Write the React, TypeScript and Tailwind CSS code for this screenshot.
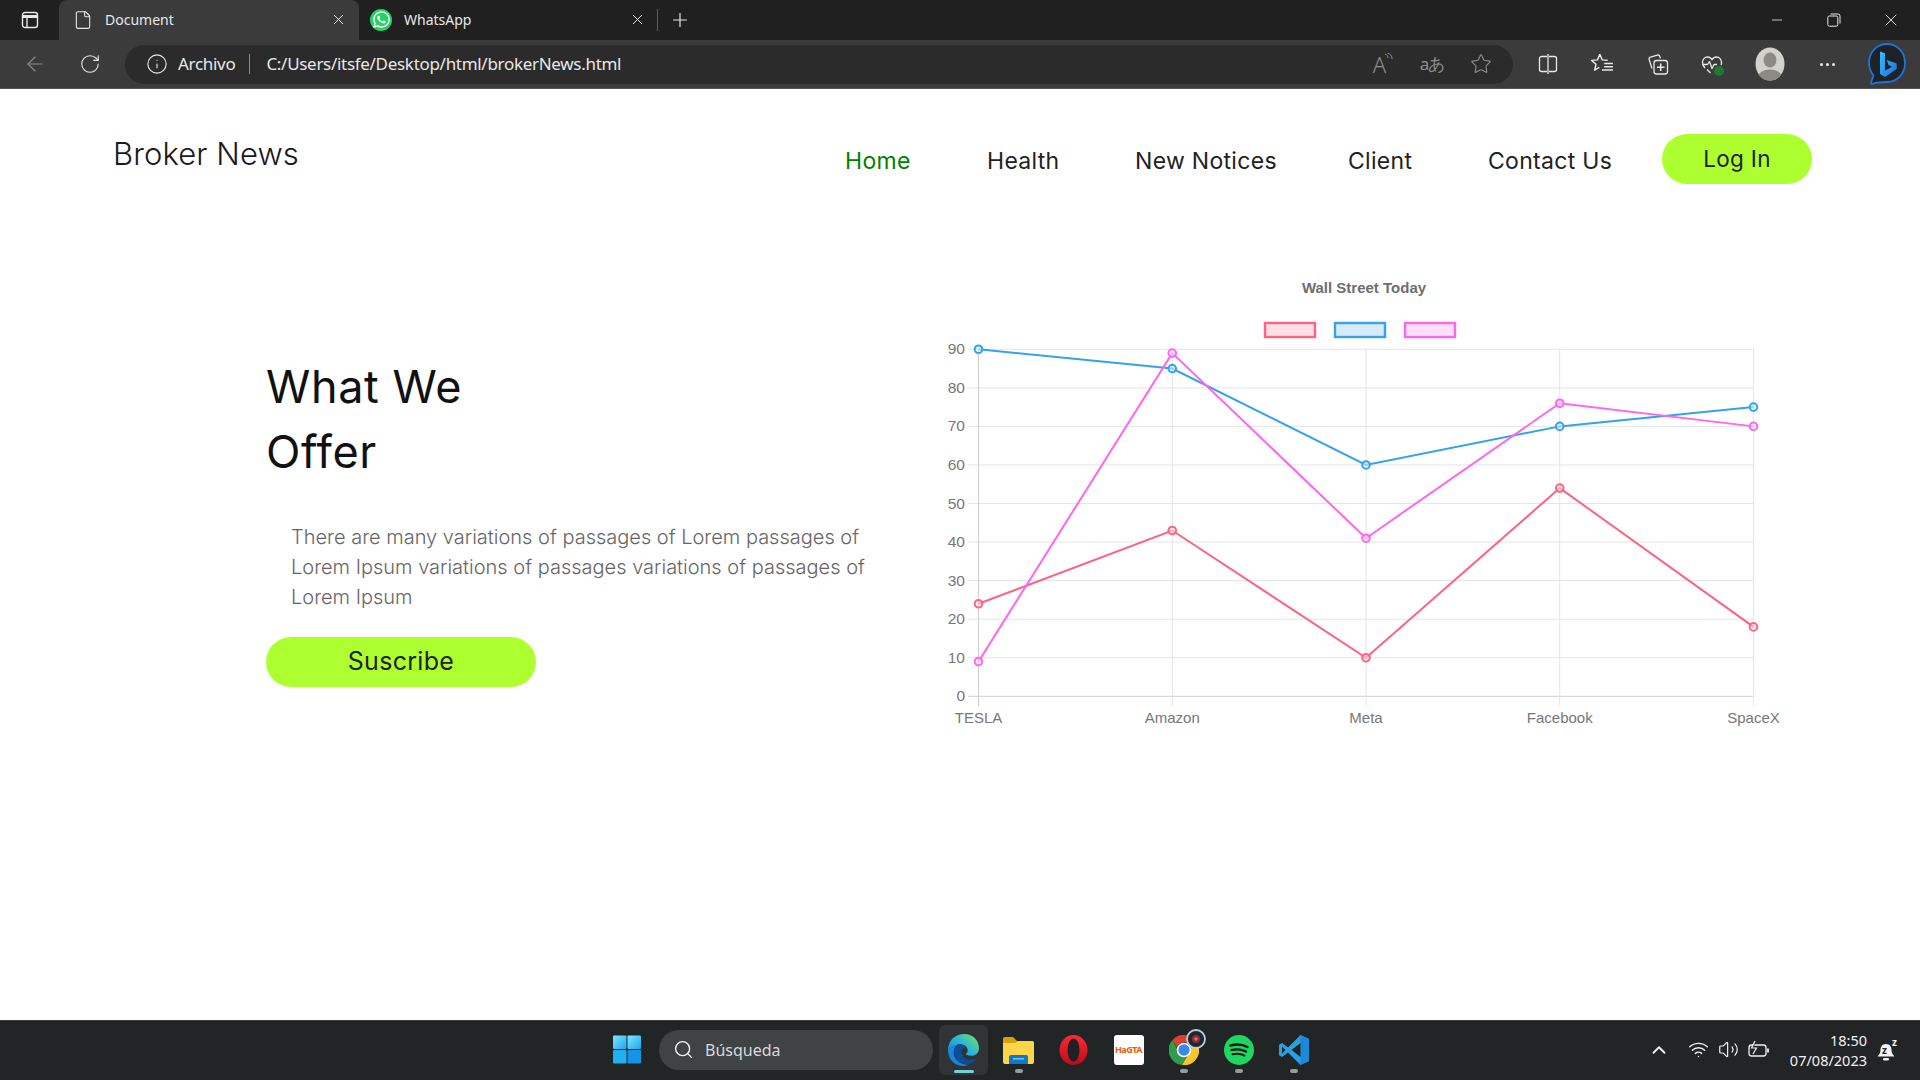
// App.tsx
import React from "react";
import { ArrowLeft, ChevronUp, File, Info, Minus, Plus, RotateCw, Search, Star, Volume2, Wifi, X } from "lucide-react";
import { FaWhatsapp } from "react-icons/fa";

const labels = ["TESLA", "Amazon", "Meta", "Facebook", "SpaceX"];
const series = [
    { color: "#ff6384", fill: "#ffe0e6", data: [24, 43, 10, 54, 18] },
    { color: "#36a2eb", fill: "#d7ecfb", data: [90, 85, 60, 70, 75] },
    { color: "#ff66ee", fill: "#ffe0fc", data: [9, 89, 41, 76, 70] },
];

const chartX = (i: number) => 978.5 + i * 193.75;
const chartY = (v: number) => 696.3 - v * 3.856;

function WallStreetChart() {
    const ticks = [0, 10, 20, 30, 40, 50, 60, 70, 80, 90];
    return (
        <svg width="860" height="470" viewBox="940 270 860 470" className="shrink-0" fontFamily="'Liberation Sans', Arial, sans-serif">
            <text x="1364" y="293" textAnchor="middle" fontSize="15" fontWeight="700" fill="#6e6e6e">Wall Street Today</text>
            {series.map((s, i) => (
                <rect key={s.color} x={1265 + i * 70} y="323" width="50" height="14" fill={s.fill} stroke={s.color} strokeWidth="2.4" />
            ))}
            {/* grid */}
            {ticks.map(t => (
                <g key={t}>
                    <line x1="968" x2="1753.5" y1={chartY(t)} y2={chartY(t)} stroke={t === 0 ? "#cfcfcf" : "#e5e5e5"} strokeWidth="1" />
                    <text x="965" y={chartY(t) + 5} textAnchor="end" fontSize="15.5" fill="#777">{t}</text>
                </g>
            ))}
            {labels.map((l, i) => (
                <g key={l}>
                    <line x1={chartX(i)} x2={chartX(i)} y1="349.3" y2="706" stroke={i === 0 ? "#cfcfcf" : "#e5e5e5"} strokeWidth="1" />
                    <text x={chartX(i)} y="723" textAnchor="middle" fontSize="15" fill="#777">{l}</text>
                </g>
            ))}
            {/* lines */}
            {series.map(s => (
                <g key={s.color}>
                    <polyline
                        fill="none"
                        stroke={s.color}
                        strokeWidth="2"
                        points={s.data.map((v, i) => `${chartX(i)},${chartY(v)}`).join(" ")}
                    />
                    {s.data.map((v, i) => (
                        <circle key={i} cx={chartX(i)} cy={chartY(v)} r="3.8" fill={s.fill} fillOpacity="0.6" stroke={s.color} strokeWidth="2" />
                    ))}
                </g>
            ))}
        </svg>
    );
}

function SidebarIcon() {
    return (
        <svg width="18" height="18" viewBox="0 0 18 18" fill="none" stroke="#e8e8e8" strokeWidth="1.4">
            <rect x="1.5" y="1.5" width="15" height="15" rx="2.5" />
            <path d="M1.5 5.5h15" strokeWidth="3" />
            <path d="M6 5.5v11" />
        </svg>
    );
}

function RestoreIcon() {
    return (
        <svg width="14" height="14" viewBox="0 0 14 14" fill="none" stroke="#e8e8e8" strokeWidth="1">
            <rect x="0.8" y="3" width="10" height="10.2" rx="1.6" />
            <path d="M3.5 1h7.5a2 2 0 0 1 2 2v7.5" />
        </svg>
    );
}

function ReadAloudIcon() {
    return (
        <span className="relative -ml-[7px] flex h-6 w-6 items-center justify-center">
            <span className="font-['Noto_Sans',sans-serif] text-[22px] leading-none font-light text-[#8f8f8f]">A</span>
            <svg className="absolute top-[1px] -right-[1px]" width="9" height="10" viewBox="0 0 9 10" fill="none" stroke="#8f8f8f" strokeWidth="1">
                <path d="M1 1c2 .6 3 2 3 4" />
                <path d="M3.5 0c3 .8 4.6 3 4.6 6" />
            </svg>
        </span>
    );
}

function SplitIcon() {
    return (
        <svg width="20" height="22" viewBox="0 0 20 22" fill="none" stroke="#e8e8e8" strokeWidth="1.3">
            <path d="M9 3.5H3.5a2 2 0 0 0-2 2v11a2 2 0 0 0 2 2H9" />
            <path d="M11 3.5h5.5a2 2 0 0 1 2 2v11a2 2 0 0 1-2 2H11" />
            <path d="M10 1v20" />
        </svg>
    );
}

function FavoritesIcon() {
    return (
        <svg width="24" height="24" viewBox="0 0 22 22" fill="none" stroke="#e8e8e8" strokeWidth="1.3" strokeLinejoin="round">
            <path d="M9 2l2.2 5.2 5 .4M9 2L6.8 7.2l-5.3.5 4 3.6-1.3 5.4 4.3-2.6" />
            <path d="M13 10.5h8M13 13.5h8M11 16.5h10" />
        </svg>
    );
}

function CollectionsIcon() {
    return (
        <svg width="22" height="22" viewBox="0 0 22 22" fill="none" stroke="#e8e8e8" strokeWidth="1.3">
            <path d="M5 15.5 2.2 6.6a2 2 0 0 1 1.3-2.5l6.8-2a2 2 0 0 1 2.5 1.3l.6 2" />
            <rect x="7" y="7.5" width="13.5" height="13.5" rx="2.5" />
            <path d="M13.7 10.5v7.5M10 14.2h7.5" strokeWidth="1.6" />
        </svg>
    );
}

function HeartIcon() {
    return (
        <span className="relative flex h-6 w-6 items-center justify-center">
            <svg width="22" height="22" viewBox="0 0 22 22" fill="none" stroke="#e8e8e8" strokeWidth="1.3" strokeLinejoin="round">
                <path d="M4 15C2.4 13.3 1.5 11.8 1.5 9.5 1.5 6.5 3.6 4 6.5 4c2 0 3.5 1 4.500 2.700C12 5 13.500 4 15.500 4c2.900 0 5 2.500 5 5.500 0 1-.2 1.800-.5 2.500" />
                <path d="M1.500 11.500h5l2-3 2.500 7 2-4h3" />
                <path d="M6 16.500l3.500 3.500" />
            </svg>
            <span className="absolute right-0 bottom-0 h-[10px] w-[10px] rounded-full bg-[#1d7a34]" />
        </span>
    );
}

function Avatar() {
    return (
        <svg width="30" height="34" viewBox="0 0 30 34">
            <defs>
                <clipPath id="avatarClip">
                    <ellipse cx="15" cy="17" rx="14.5" ry="16.5" />
                </clipPath>
            </defs>
            <ellipse cx="15" cy="17" rx="14.5" ry="16.5" fill="#d2d1cc" />
            <g clipPath="url(#avatarClip)">
                <ellipse cx="15" cy="13" rx="6.5" ry="7.5" fill="#8b8a87" />
                <ellipse cx="15" cy="30" rx="12" ry="7.5" fill="#8b8a87" />
            </g>
        </svg>
    );
}

function BingIcon() {
    return (
        <svg width="40" height="44" viewBox="0 0 40 44">
            <defs>
                <linearGradient id="bingB" x1="0" y1="0" x2="1" y2="1">
                    <stop offset="0" stopColor="#37bdf8" />
                    <stop offset="1" stopColor="#1a6fe0" />
                </linearGradient>
            </defs>
            <path d="M20 2C10 2 2 10 2 21c0 5 1.8 9 4.5 12.5L4 40.5c-.3 1.200.5 1.700 1.500 1.300 3.500-1.300 7-1.800 14.500-1.800 10 0 18-8 18-19S30 2 20 2Z" fill="#1e2227" stroke="#1b74d8" strokeWidth="1.8" />
            <path d="M13 9.500l5 1.800v17.500l7-4-3.500-1.700-1.800-5 10 3.500v5.500L18 35l-5-3Z" fill="url(#bingB)" />
        </svg>
    );
}

function WindowsLogo() {
    return (
        <svg width="29" height="29" viewBox="0 0 29 29">
            <defs>
                <linearGradient id="winA" x1="0" y1="0" x2="1" y2="1">
                    <stop offset="0" stopColor="#7fe6ff" />
                    <stop offset="1" stopColor="#1aa9f0" />
                </linearGradient>
            </defs>
            <rect x="0" y="0" width="14" height="14" rx="1" fill="url(#winA)" />
            <rect x="15" y="0" width="14" height="14" rx="1" fill="url(#winA)" />
            <rect x="0" y="15" width="14" height="14" rx="1" fill="#22b0f3" />
            <rect x="15" y="15" width="14" height="14" rx="1" fill="#1593e6" />
        </svg>
    );
}

function EdgeLogo() {
    return (
        <svg width="33" height="33" viewBox="0 0 34 34">
            <defs>
                <linearGradient id="edgeTop" x1="0" y1="1" x2="1" y2="0.2">
                    <stop offset="0" stopColor="#1180d8" />
                    <stop offset="0.55" stopColor="#2bb6d8" />
                    <stop offset="1" stopColor="#6bdc6c" />
                </linearGradient>
            </defs>
            <path d="M1 18C1 8 8 1 18 1c9 0 15 7 15 14.5 0 5-3.5 8-8 8-3 0-5-.8-5.5-1.800 2-1.500 2.500-4 1-6.500-2-3-6-4.300-10-3.200C6 13.500 2.500 15 1 18Z" fill="url(#edgeTop)" />
            <path d="M1 18c1.500-3 5-5.500 10-5.800C7 15 6 20 8 25c2 4.500 8 8.500 15 7.500-2 1-4 1.500-6 1.500C8 34 1 27 1 18Z" fill="#1886db" />
            <path d="M11 12.200c4-1 8.500-.2 10 3.500-4-1.700-7 1-6 5.500 1 4 5 6.800 10.500 6.300 2 0 3.500-.5 5-1.300-2 3-4.500 5-7.500 5.800-7 1-13-3-15-7.500-2-5-1-10 3-12.300Z" fill="#0c4f96" />
        </svg>
    );
}

function FolderLogo() {
    return (
        <svg width="31" height="28" viewBox="0 0 31 28">
            <path d="M0 3a2 2 0 0 1 2-2h8l4 4h15a2 2 0 0 1 2 2v4H0Z" fill="#d9a008" />
            <path d="M0 7h12l3-2h14a2 2 0 0 1 2 2v19a2 2 0 0 1-2 2H2a2 2 0 0 1-2-2Z" fill="#fdd54b" />
            <path d="M6 28v-7a2 2 0 0 1 2-2h15a2 2 0 0 1 2 2v7Z" fill="#0f78c9" />
            <rect x="10" y="22" width="11" height="1.5" fill="#7cc4f5" />
        </svg>
    );
}

function OperaLogo() {
    return (
        <svg width="29" height="30" viewBox="0 0 29 30">
            <defs>
                <linearGradient id="operaRed" x1="0" y1="0" x2="0" y2="1">
                    <stop offset="0" stopColor="#ff2a33" />
                    <stop offset="1" stopColor="#b80c1c" />
                </linearGradient>
            </defs>
            <ellipse cx="14.5" cy="15" rx="14" ry="15" fill="url(#operaRed)" />
            <ellipse cx="14.5" cy="15" rx="6" ry="11.5" fill="#1f2223" />
        </svg>
    );
}

function ChromeLogo() {
    return (
        <span className="relative flex h-[30px] w-[30px] items-center justify-center">
            <svg width="30" height="30" viewBox="0 0 30 30">
                <path d="M15 0a15 15 0 0 1 13 7.5H15a7.5 7.5 0 0 0-7 4.800L3.500 5A15 15 0 0 1 15 0Z" fill="#e2402f" />
                <path d="M3.500 5 10 17a7.500 7.500 0 0 0 7.500 5L13 30A15 15 0 0 1 3.500 5Z" fill="#2f9e4b" />
                <path d="M28 7.500A15 15 0 0 1 13 30l6.500-11a7.500 7.500 0 0 0 0-11.500Z" fill="#f7c526" />
                <circle cx="15" cy="15" r="6.5" fill="#3b87f0" stroke="#fff" strokeWidth="1.6" />
            </svg>
            <svg className="absolute -top-[6px] -right-[7px]" width="20" height="20" viewBox="0 0 20 20">
                <circle cx="10" cy="10" r="9" fill="#23262c" stroke="#b9cfe0" strokeWidth="1.8" />
                <circle cx="10" cy="10" r="4" fill="#8a2b3f" />
                <circle cx="10" cy="10" r="1.8" fill="#f0693f" />
            </svg>
        </span>
    );
}

function SpotifyLogo() {
    return (
        <svg width="30" height="30" viewBox="0 0 30 30" fill="none" stroke="#17181a" strokeLinecap="round">
            <circle cx="15" cy="15" r="15" fill="#1ed760" stroke="none" />
            <path d="M6.5 10.5c6-1.600 12-1.100 17 1.500" strokeWidth="2.5" />
            <path d="M7.5 15c5-1.300 10-.8 14.500 1.500" strokeWidth="2.2" />
            <path d="M8.5 19.300c4.500-1 8.500-.6 12 1.300" strokeWidth="1.9" />
        </svg>
    );
}

function VSCodeLogo() {
    return (
        <svg width="30" height="30" viewBox="0 0 30 30">
            <path d="M21.5 0 30 4v22l-8.500 4L9 17.500 3 22l-3-1.700V9.700L3 8l6 4.500Z" fill="#2a9fe4" />
            <path d="M21.5 0 30 4v22l-8.500 4Z" fill="#1a8ad8" />
            <path d="M21.5 8 12.500 15l9 7Z" fill="#1f2223" />
            <path d="M3 11.500 6.500 15 3 18.500Z" fill="#1f2223" />
        </svg>
    );
}

function BatteryIcon() {
    return (
        <svg width="22" height="20" viewBox="0 0 22 20" fill="none" stroke="#f2f2f2" strokeWidth="1.3">
            <rect x="1" y="5" width="17" height="11" rx="2.5" />
            <path d="M20 8.500v4" strokeWidth="1.8" />
            <path d="M7 1 3.500 8h5L5 14" fill="#222526" strokeWidth="1.2" />
        </svg>
    );
}

function BellIcon() {
    return (
        <span className="relative flex h-[24px] w-[22px] items-end justify-center">
            <svg width="20" height="20" viewBox="0 0 20 20">
                <path d="M10 2C6 2 4.500 5 4.500 8c0 3-1.300 4.500-3 6.500h17C16.800 12.500 15.500 11 15.500 8c0-3-1.500-6-5.500-6Z" fill="#f2f2f2" />
                <rect x="7" y="16" width="6" height="2.4" rx="1.2" fill="#f2f2f2" />
            </svg>
            <span className="absolute top-[7px] left-[7px] text-[10px] leading-none font-bold text-[#222526]">z</span>
            <span className="absolute -top-[1px] right-0 text-[10px] leading-none font-bold text-[#f2f2f2]">z</span>
        </span>
    );
}

const navItems = [
    { label: "Health", width: "w-[73px]" },
    { label: "New Notices", width: "w-[138px]" },
    { label: "Client", width: "w-[65px]" },
];

export default function App() {
    return (
        <div className="flex h-[1080px] w-[1920px] flex-col overflow-hidden bg-white font-['Inter',sans-serif]">
            {/* Tab strip */}
            <div className="flex h-[40px] shrink-0 items-stretch bg-[#202020] font-['Noto_Sans',sans-serif] text-[#e8e8e8]">
                <div className="flex w-[59px] items-center justify-center">
                    <SidebarIcon />
                </div>
                <div className="flex w-[300px] items-center rounded-t-lg bg-[#3b3b3b] pr-[12px] pb-[1px] pl-[14px]">
                    <File size={20} strokeWidth={1.3} />
                    <span className="ml-[12px] text-[14px]">Document</span>
                    <X size={17} strokeWidth={1.4} className="ml-auto" />
                </div>
                <div className="flex w-[298px] items-center pr-[11px] pb-[1px] pl-[11px]">
                    <span className="flex h-[22px] w-[22px] items-center justify-center rounded-full bg-[#25d366]">
                        <FaWhatsapp size={19} color="#fff" />
                    </span>
                    <span className="ml-[12px] text-[14px]">WhatsApp</span>
                    <X size={17} strokeWidth={1.4} className="ml-auto" />
                </div>
                <div className="my-[9px] w-px bg-[#5a5a5a]" />
                <div className="ml-[11px] flex items-center">
                    <Plus size={22} strokeWidth={1.3} />
                </div>
                <div className="ml-auto flex items-center pr-[1px]">
                    <span className="flex w-[57px] justify-center"><Minus size={16} strokeWidth={1.2} /></span>
                    <span className="flex w-[57px] justify-center"><RestoreIcon /></span>
                    <span className="flex w-[57px] justify-center"><X size={20} strokeWidth={1.1} /></span>
                </div>
            </div>

            {/* Toolbar */}
            <div className="flex h-[49px] shrink-0 items-center border-b border-[#555] bg-[#3b3b3b] pl-[11px] font-['Noto_Sans',sans-serif] text-[#e8e8e8]">
                <span className="flex w-[48px] justify-center"><ArrowLeft size={24} strokeWidth={1.1} color="#8a8a8a" /></span>
                <span className="ml-[7px] flex w-[48px] justify-center"><RotateCw size={22} strokeWidth={1.2} /></span>
                <div className="ml-[11px] flex h-[39px] w-[1388px] items-center rounded-full bg-[#2b2b2b] pr-[8px] pl-[21px]">
                    <Info size={22} strokeWidth={1.2} />
                    <span className="ml-[10px] text-[17px] tracking-[-0.3px]">Archivo</span>
                    <span className="mr-[16px] ml-[14px] h-[20px] w-px bg-[#8a8a8a]" />
                    <span className="text-[17px] tracking-[-0.3px]">C:/Users/itsfe/Desktop/html/brokerNews.html</span>
                    <div className="ml-auto flex items-center gap-[1px]">
                        <span className="flex w-[48px] justify-center"><ReadAloudIcon /></span>
                        <span className="flex w-[48px] justify-center text-[17px] tracking-[-1px] text-[#8f8f8f]">aあ</span>
                        <span className="flex w-[48px] justify-center"><Star size={22} strokeWidth={1.2} color="#8f8f8f" /></span>
                    </div>
                </div>
                <span className="ml-[11px] flex w-[48px] justify-center"><SplitIcon /></span>
                <span className="ml-[6px] flex w-[48px] justify-center"><FavoritesIcon /></span>
                <span className="ml-[8px] flex w-[48px] justify-center"><CollectionsIcon /></span>
                <span className="ml-[6px] flex w-[48px] justify-center"><HeartIcon /></span>
                <span className="ml-[10px] flex w-[48px] justify-center"><Avatar /></span>
                <span className="ml-[9px] flex w-[48px] justify-center gap-[3px]">
                    <i className="h-[3px] w-[3px] rounded-full bg-[#e8e8e8]" />
                    <i className="h-[3px] w-[3px] rounded-full bg-[#e8e8e8]" />
                    <i className="h-[3px] w-[3px] rounded-full bg-[#e8e8e8]" />
                </span>
                <span className="ml-[12px] flex w-[48px] justify-center"><BingIcon /></span>
            </div>

            {/* Page */}
            <main className="flex-1">
                <header className="flex items-start pt-[45px] pr-[108px] pl-[113px]">
                    <a className="-mt-[4px] text-[31px] leading-[48px] font-light tracking-[0.1px] text-[#1a1a1a]">Broker News</a>
                    <nav className="ml-auto flex items-center text-[23px] tracking-[0.3px] text-[#222]">
                        <a className="mr-[75px] w-[67px] pt-[4px] text-[#008000]">Home</a>
                        {navItems.map(item => (
                            <a key={item.label} className={`mr-[75px] pt-[4px] whitespace-nowrap ${item.width}`}>{item.label}</a>
                        ))}
                        <a className="mr-[49px] w-[125px] pt-[4px] whitespace-nowrap">Contact Us</a>
                        <button className="h-[50px] w-[150px] rounded-[25px] bg-[#adff2f] text-[22.5px] text-[#222]">Log In</button>
                    </nav>
                </header>

                <section className="mt-[86px] flex items-start pl-[266px]">
                    <div className="mt-[85px] w-[674px]">
                        <h1 className="-mt-[1px] text-[45px] leading-[65px] font-normal tracking-[0.6px] text-[#111]">What We<br />Offer</h1>
                        <p className="mt-[38px] pl-[25px] text-[20px] leading-[30px] font-light whitespace-nowrap text-[#666]">
                            There are many variations of passages of Lorem passages of<br />
                            Lorem Ipsum variations of passages variations of passages of<br />
                            Lorem Ipsum
                        </p>
                        <button className="mt-[25px] h-[50px] w-[270px] rounded-[25px] bg-[#adff2f] text-[25px] tracking-[0.3px] text-[#222]">Suscribe</button>
                    </div>
                    <WallStreetChart />
                </section>
            </main>

            {/* Taskbar */}
            <div className="flex h-[60px] shrink-0 items-center border-t border-[#3a3a3a] bg-[#222526] pb-[2px] font-['Noto_Sans',sans-serif] text-[#f2f2f2]">
                <span className="ml-[613px] flex w-[28px] justify-center"><WindowsLogo /></span>
                <div className="ml-[18px] flex h-[40px] w-[274px] items-center rounded-full bg-[#3f4344] pl-[14px]">
                    <Search size={21} strokeWidth={1.6} />
                    <span className="ml-[11px] text-[16px] text-[#d8d8d8]">Búsqueda</span>
                </div>
                <div className="relative ml-[6px] flex h-[50px] w-[49px] items-center justify-center rounded-md bg-[#303436]">
                    <EdgeLogo />
                    <i className="absolute bottom-[2px] left-1/2 h-[3px] w-[20px] -translate-x-1/2 rounded-full bg-[#6fd3df]" />
                </div>
                {[
                    { id: "files", el: <FolderLogo />, dot: true },
                    { id: "opera", el: <OperaLogo />, dot: false },
                    {
                        id: "app",
                        el: (
                            <span className="flex h-[30px] w-[30px] items-center justify-center overflow-hidden rounded-[3px] bg-white text-[9px] font-bold tracking-[-0.5px] text-[#e8590c]">
                                HaGTA
                            </span>
                        ),
                        dot: false,
                    },
                    { id: "chrome", el: <ChromeLogo />, dot: true },
                    { id: "spotify", el: <SpotifyLogo />, dot: true },
                    { id: "vscode", el: <VSCodeLogo />, dot: true },
                ].map(app => (
                    <div key={app.id} className="relative ml-[6px] flex h-[50px] w-[49px] items-center justify-center">
                        {app.el}
                        {app.dot && <i className="absolute bottom-[2px] left-1/2 h-[4px] w-[8px] -translate-x-1/2 rounded-full bg-[#9a9a9a]" />}
                    </div>
                ))}

                <div className="ml-auto flex items-center pr-[23px]">
                    <ChevronUp size={22} strokeWidth={2} />
                    <Wifi size={21} strokeWidth={1.7} className="ml-[18px]" />
                    <Volume2 size={21} strokeWidth={1.4} className="ml-[9px]" />
                    <span className="ml-[9px]"><BatteryIcon /></span>
                    <div className="ml-[20px] flex flex-col items-end text-[14.5px] leading-[20px]">
                        <span>18:50</span>
                        <span>07/08/2023</span>
                    </div>
                    <span className="ml-[8px]"><BellIcon /></span>
                </div>
            </div>
        </div>
    );
}
